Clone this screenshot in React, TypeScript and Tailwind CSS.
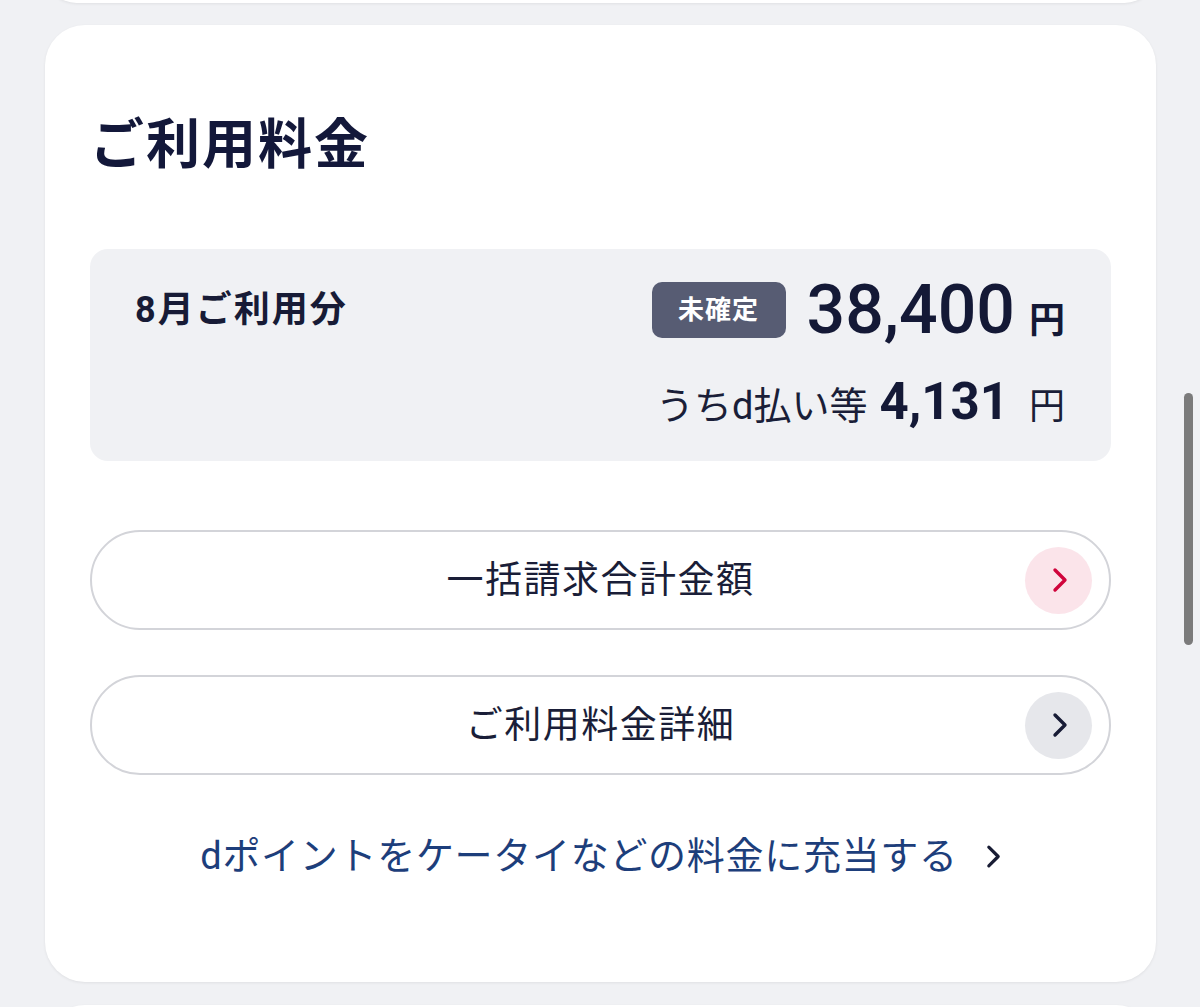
const Chevron = ({ className }: { className: string }) => (
  <svg viewBox="0 0 16 26" className={className} fill="none">
    <path d="M3 3l10 10-10 10" stroke="currentColor" strokeWidth="3.4" strokeLinecap="round" strokeLinejoin="round" />
  </svg>
);

type PillProps = {
  label: string;
  tone: "red" | "gray";
};

const PillButton = ({ label, tone }: PillProps) => {
  return (
    <button className="h-[100px] w-full rounded-full border-2 border-[#d3d4d9] bg-white px-[17px] grid grid-cols-[67px_1fr_67px] items-center">
      <span />
      <span className="text-[37px] leading-none tracking-[1.5px] text-[#1a1e38]">{label}</span>
      <span
        className={
          tone === "red"
            ? "w-[67px] h-[67px] rounded-full bg-[#fbe4ea] text-[#d0043c] flex items-center justify-center"
            : "w-[67px] h-[67px] rounded-full bg-[#e6e7eb] text-[#181c36] flex items-center justify-center"
        }
      >
        <Chevron className="w-[16px] h-[26px] ml-[3px]" />
      </span>
    </button>
  );
};

export default function App() {
  return (
    <div
      className="relative h-[1007px] w-[1200px] overflow-hidden bg-[#f0f1f4] px-[45px] flex flex-col"
      style={{ fontFamily: 'Roboto, "Noto Sans CJK JP", sans-serif' }}
    >
      {/* previous card, only its bottom edge shows */}
      <div className="-mt-[60px] h-[63px] w-[1111px] shrink-0 rounded-[40px] bg-white shadow-[0_1px_3px_rgba(0,0,0,0.07)]" />

      {/* BILLING CARD */}
      <div className="mt-[22px] h-[957px] w-[1111px] shrink-0 rounded-[40px] bg-white shadow-[0_1px_3px_rgba(0,0,0,0.07)] px-[45px] pt-[89px] flex flex-col">
        <h1 className="text-[54px] leading-[64px] font-bold tracking-[2px] text-[#13183a]">ご利用料金</h1>

        {/* AMOUNT BOX */}
        <div className="mt-[71px] h-[212px] rounded-[18px] bg-[#f0f1f4] pl-[45px] pr-[46px] pt-[33px] flex justify-between items-start">
          <div className="text-[36px] leading-[56px] font-bold tracking-[2px] text-[#171b36]">8月ご利用分</div>

          <div className="flex flex-col items-end">
            <div className="h-[56px] flex items-center gap-[21px]">
              <span className="h-[56px] w-[134px] rounded-[10px] bg-[#575c73] text-white text-[26px] font-bold flex items-center justify-center tracking-[1px]">
                未確定
              </span>
              <span className="inline-flex items-baseline gap-[14px] leading-none text-[#141936]">
                <span className="text-[68px] font-medium">38,400</span>
                <span className="text-[36px] font-bold">円</span>
              </span>
            </div>
            <div className="mt-[38px] flex items-baseline leading-none text-[#1a1e38]">
              <span className="text-[38px]">うちd払い等</span>
              <span className="ml-[12px] text-[51px] font-bold text-[#141936]">4,131</span>
              <span className="ml-[20px] text-[36px]">円</span>
            </div>
          </div>
        </div>

        {/* BUTTONS */}
        <div className="mt-[69px] flex flex-col gap-[45px]">
          <PillButton label="一括請求合計金額" tone="red" />
          <PillButton label="ご利用料金詳細" tone="gray" />
        </div>

        {/* LINK */}
        <a className="mt-[57px] flex items-center justify-center gap-[28px] leading-[48px]">
          <span className="text-[38px] tracking-[0.7px] text-[#1d3e7b]">dポイントをケータイなどの料金に充当する</span>
          <Chevron className="w-[15px] h-[25px] text-[#181c34]" />
        </a>
      </div>

      {/* next card, top edge */}
      <div className="mt-[23px] h-[100px] w-[1111px] shrink-0 rounded-[40px] bg-white shadow-[0_1px_3px_rgba(0,0,0,0.07)]" />

      {/* scrollbar */}
      <div className="absolute right-[7px] top-[393px] w-[9px] h-[252px] rounded-full bg-[#7b7b7b]" />
    </div>
  );
}
